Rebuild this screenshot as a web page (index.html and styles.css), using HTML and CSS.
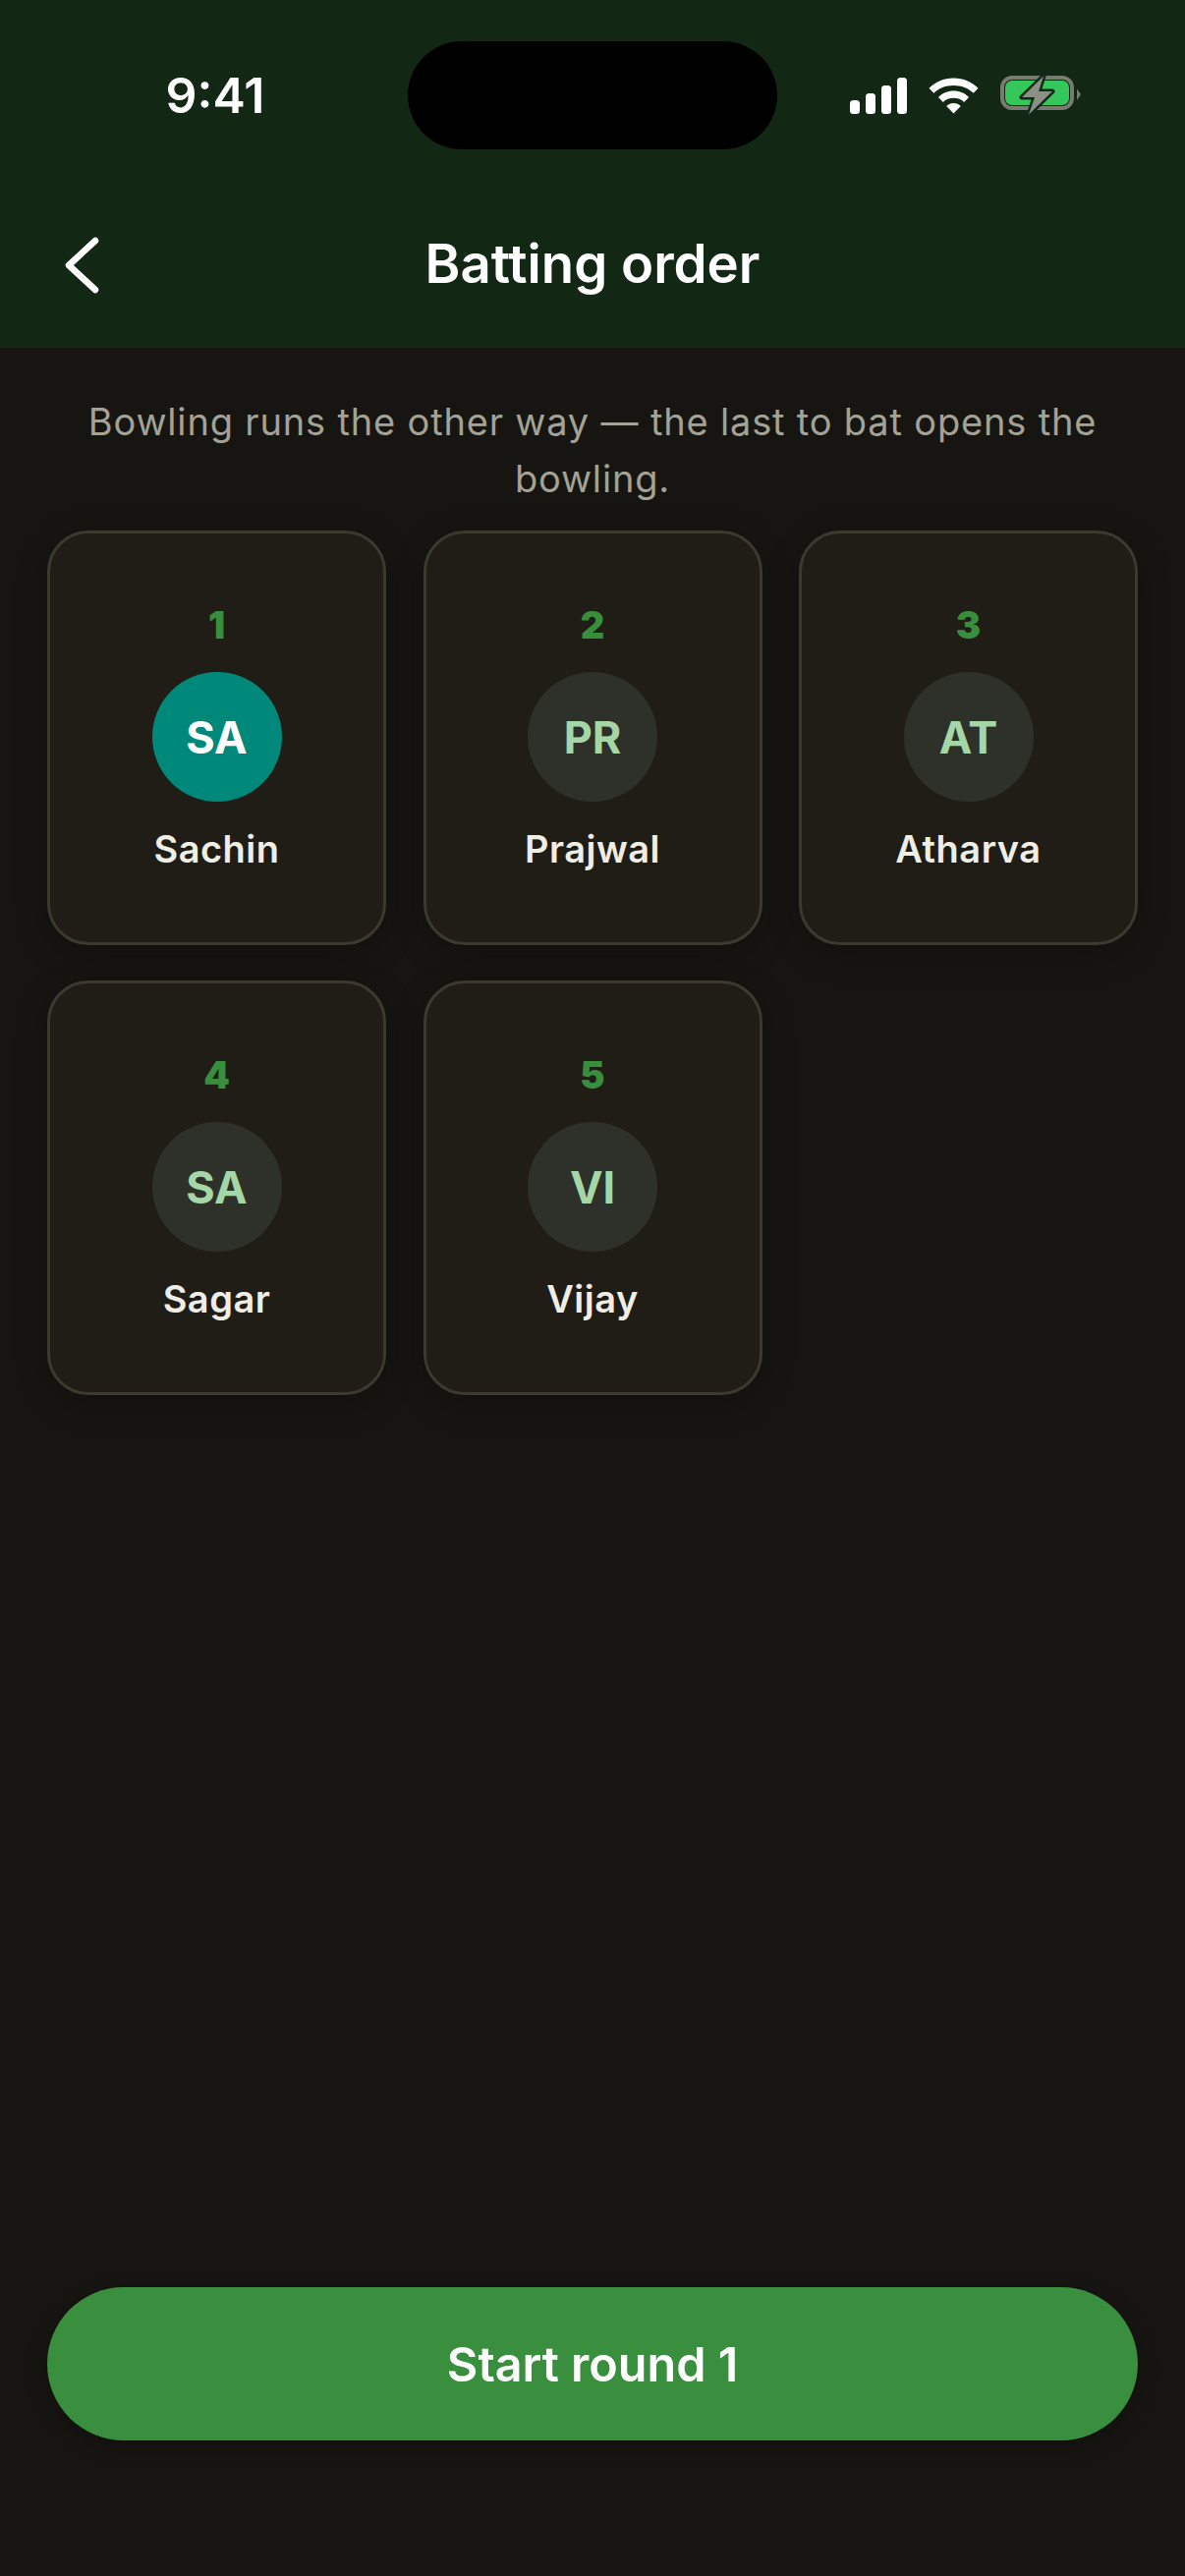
FILE: index.html
```html
<!DOCTYPE html>
<html>
<head>
  <title>Batting order</title>
  <link rel="stylesheet" href="styles.css">
</head>
<body>
  <div class="screen">
    <header class="top">
      <div class="status">
        <span class="time">9:41</span>
        <div class="island"></div>
        <div class="status-icons">
          <svg class="signal" width="58" height="37" viewBox="0 0 58 37">
            <rect x="0" y="23" width="10" height="14" rx="3.5" fill="#fff"/>
            <rect x="16" y="16" width="10" height="21" rx="3.5" fill="#fff"/>
            <rect x="32" y="8" width="10" height="29" rx="3.5" fill="#fff"/>
            <rect x="48" y="0" width="10" height="37" rx="3.5" fill="#fff"/>
          </svg>
          <svg class="wifi" width="51" height="37" viewBox="0 0 51 37">
            <path d="M25.500 0.500C15.500 0.500 7 4.400 0.500 10.800L5.300 15.800C10.500 10.700 17.600 8 25.500 8S40.500 10.700 45.700 15.800L50.500 10.800C44 4.400 35.500 0.500 25.500 0.500Z" fill="#fff"/>
            <path d="M25.500 13.500C19.300 13.500 14 15.900 10 19.900L14.800 25C17.600 22.200 21.300 20.800 25.500 20.800S33.400 22.200 36.200 25L41 19.900C37 15.900 31.700 13.500 25.500 13.500Z" fill="#fff"/>
            <path d="M25.500 26C22.700 26 20.300 27 18.200 29L25.500 36.500L32.800 29C30.700 27 28.300 26 25.500 26Z" fill="#fff"/>
          </svg>
          <svg class="battery" width="84" height="44" viewBox="0 0 84 44">
            <rect x="2" y="4" width="71" height="31" rx="10" fill="none" stroke="#777b70" stroke-width="4"/>
            <rect x="5" y="7" width="65" height="25" rx="7" fill="#34c759"/>
            <path d="M78 15.500L82 21L78 27Z" fill="#777b70"/>
            <path d="M44 2.500L22 24H35L29 41.500L53 18H39Z" fill="#8b9084" stroke="#12281a" stroke-width="5" stroke-linejoin="round" paint-order="stroke"/>
          </svg>
        </div>
      </div>
      <div class="nav">
        <svg class="back" width="36" height="62" viewBox="0 0 36 62">
          <path d="M31 6L4 31L31 56" fill="none" stroke="#fff" stroke-width="6.500" stroke-linecap="round" stroke-linejoin="round"/>
        </svg>
        <h1 class="title">Batting order</h1>
      </div>
    </header>

    <main class="content">
      <p class="hint">Bowling runs the other way — the last to bat opens the bowling.</p>
      <div class="grid">
        <div class="card">
          <span class="num">1</span>
          <span class="avatar avatar-active">SA</span>
          <span class="name">Sachin</span>
        </div>
        <div class="card">
          <span class="num">2</span>
          <span class="avatar">PR</span>
          <span class="name">Prajwal</span>
        </div>
        <div class="card">
          <span class="num">3</span>
          <span class="avatar">AT</span>
          <span class="name">Atharva</span>
        </div>
        <div class="card">
          <span class="num">4</span>
          <span class="avatar">SA</span>
          <span class="name">Sagar</span>
        </div>
        <div class="card">
          <span class="num">5</span>
          <span class="avatar">VI</span>
          <span class="name">Vijay</span>
        </div>
      </div>
      <button class="start" type="button">Start round 1</button>
    </main>
  </div>
</body>
</html>
```

FILE: styles.css
```css
* {
  box-sizing: border-box;
}

body {
  margin: 0;
  background-color: #161511;
  font-family: Inter, "Liberation Sans", sans-serif;
}

.screen {
  width: 1206px;
  height: 2622px;
  display: flex;
  flex-direction: column;
  overflow: hidden;
}

.top {
  height: 354px;
  background-color: #122814;
  color: #fff;
}

.status {
  height: 194px;
  padding-top: 42px;
  display: grid;
  grid-template-columns: 415px 376px 1fr;
}

.time {
  height: 110px;
  line-height: 110px;
  text-align: center;
  padding-left: 23px;
  font-size: 50px;
  font-weight: 600;
}

.island {
  width: 376px;
  height: 110px;
  border-radius: 55px;
  background-color: #000;
}

.status-icons {
  height: 110px;
  padding-left: 74px;
  display: flex;
  align-items: center;
}

.wifi {
  margin-left: 22px;
}

.battery {
  margin-left: 22px;
}

.nav {
  position: relative;
  height: 150px;
  display: flex;
  align-items: flex-start;
  justify-content: center;
}

.back {
  position: absolute;
  left: 66px;
  top: 45px;
}

.title {
  margin: 0;
  padding-top: 44px;
  font-size: 54.500px;
  line-height: 60px;
  font-weight: 600;
}

.content {
  flex: 1;
  padding: 0 48px 138px;
  display: flex;
  flex-direction: column;
}

.hint {
  margin: 47px 30px 0;
  font-size: 38px;
  line-height: 57.500px;
  letter-spacing: 0.830px;
  text-align: center;
  color: #a2a296;
}

.grid {
  margin-top: 24px;
  display: grid;
  grid-template-columns: 345px 345px 345px;
  grid-auto-rows: 422px;
  gap: 36px 37.500px;
}

.card {
  padding-top: 70px;
  display: flex;
  flex-direction: column;
  align-items: center;
  background-color: #1f1d16;
  border: 3px solid #3a3a2e;
  border-radius: 42px;
  box-shadow: 0 8px 32px rgba(0, 0, 0, 0.25);
}

.num {
  font-size: 38px;
  line-height: 46px;
  font-weight: 900;
  color: #388e3c;
}

.avatar {
  width: 132px;
  height: 132px;
  margin-top: 25px;
  border-radius: 50%;
  display: flex;
  align-items: center;
  justify-content: center;
  background-color: #2e3129;
  color: #a5d6a7;
  font-size: 45px;
  font-weight: 700;
}

.avatar-active {
  background-color: #00897b;
  color: #fff;
}

.name {
  margin-top: 23px;
  font-size: 38px;
  line-height: 50px;
  font-weight: 600;
  letter-spacing: 0.500px;
  color: #eeeee6;
}

.start {
  height: 156px;
  margin-top: auto;
  border: none;
  border-radius: 78px;
  background-color: #3a8f3e;
  color: #fff;
  font-family: inherit;
  font-size: 48.500px;
  font-weight: 600;
  box-shadow: 0 6px 20px rgba(0, 0, 0, 0.25);
}
```
